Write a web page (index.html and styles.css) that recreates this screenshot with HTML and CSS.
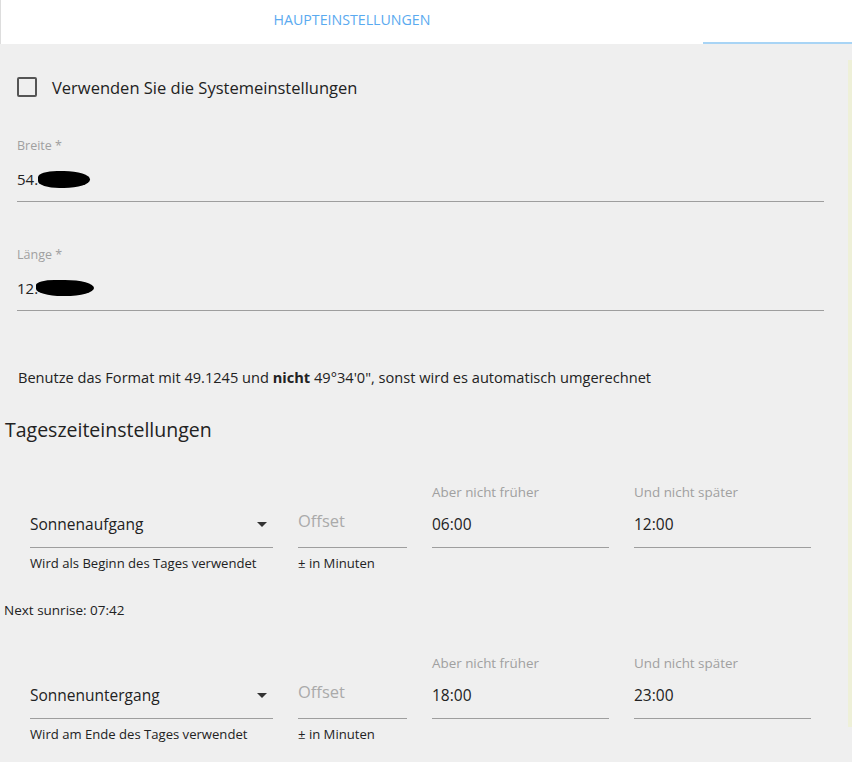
FILE: index.html
```html
<!DOCTYPE html>
<html lang="de">
<head>
    <meta charset="UTF-8">
    <meta name="viewport" content="width=device-width, initial-scale=1.0">
    <title>Haupteinstellungen</title>
    <link rel="stylesheet" href="styles.css">
</head>
<body>
    <div class="tabs">
        <div class="tab tab-main">HAUPTEINSTELLUNGEN</div>
        <div class="tab tab-second"></div>
    </div>
    <div class="page">
        <div class="content">
            <label class="check-row">
                <span class="checkbox"></span>
                <span>Verwenden Sie die Systemeinstellungen</span>
            </label>

            <div class="field field-first">
                <div class="field-label">Breite *</div>
                <div class="field-value">54.<span class="blot blot-a"></span></div>
            </div>
            <div class="field">
                <div class="field-label">Länge *</div>
                <div class="field-value">12.<span class="blot blot-b"></span></div>
            </div>

            <p class="hint">Benutze das Format mit 49.1245 und <b>nicht</b> 49°34'0", sonst wird es automatisch umgerechnet</p>

            <h2 class="section">Tageszeiteinstellungen</h2>

            <div class="time-row">
                <div class="col col-select">
                    <div class="col-label"></div>
                    <div class="col-value">Sonnenaufgang<span class="arrow"></span></div>
                    <div class="col-help">Wird als Beginn des Tages verwendet</div>
                </div>
                <div class="col col-offset">
                    <div class="col-label"></div>
                    <div class="col-value placeholder">Offset</div>
                    <div class="col-help">± in Minuten</div>
                </div>
                <div class="col col-time">
                    <div class="col-label">Aber nicht früher</div>
                    <div class="col-value">06:00</div>
                    <div class="col-help"></div>
                </div>
                <div class="col col-time">
                    <div class="col-label">Und nicht später</div>
                    <div class="col-value">12:00</div>
                    <div class="col-help"></div>
                </div>
            </div>

            <div class="next">Next sunrise: 07:42</div>

            <div class="time-row time-row-second">
                <div class="col col-select">
                    <div class="col-label"></div>
                    <div class="col-value">Sonnenuntergang<span class="arrow"></span></div>
                    <div class="col-help">Wird am Ende des Tages verwendet</div>
                </div>
                <div class="col col-offset">
                    <div class="col-label"></div>
                    <div class="col-value placeholder">Offset</div>
                    <div class="col-help">± in Minuten</div>
                </div>
                <div class="col col-time">
                    <div class="col-label">Aber nicht früher</div>
                    <div class="col-value">18:00</div>
                    <div class="col-help"></div>
                </div>
                <div class="col col-time">
                    <div class="col-label">Und nicht später</div>
                    <div class="col-value">23:00</div>
                    <div class="col-help"></div>
                </div>
            </div>
        </div>
        <div class="side-strip"></div>
    </div>
</body>
</html>
```

FILE: styles.css
```css
html, body {
    margin: 0;
    padding: 0;
}
body {
    background: #efefef;
    font-family: "Open Sans", "Noto Sans", sans-serif;
    color: #222;
    width: 852px;
    height: 762px;
    overflow: hidden;
}
.tabs {
    display: flex;
    height: 44px;
    background: #fff;
    border-left: 1px solid #ddd;
    box-sizing: border-box;
}
.tab-main {
    width: 702px;
    text-align: center;
    color: #5aaaf0;
    font-size: 14.2px;
    line-height: 40px;
}
.tab-second {
    flex: 1;
    border-bottom: 2px solid #a8d4f5;
    box-sizing: border-box;
}
.page {
    display: flex;
}
.content {
    flex: 1;
}
.side-strip {
    width: 4px;
    margin-top: 16px;
    height: 667px;
    background: #eef0d8;
}
.check-row {
    display: flex;
    align-items: center;
    margin: 31px 0 0 17px;
    height: 24px;
    font-size: 16.5px;
    color: #222;
}
.checkbox {
    width: 16px;
    height: 16px;
    border: 2px solid #555;
    border-radius: 2px;
    margin-right: 15px;
}
.field {
    margin: 45px 24px 0 17px;
    border-bottom: 1px solid #9e9e9e;
    padding-bottom: 10px;
}
.field-first {
    margin-top: 39px;
}
.field-label {
    font-size: 12.5px;
    line-height: 16px;
    color: #a0a0a0;
}
.field-value {
    margin-top: 13px;
    font-size: 15px;
    line-height: 24px;
    display: flex;
    align-items: center;
}
.blot {
    display: inline-block;
    background: #000;
}
.blot-a {
    width: 52px;
    height: 17px;
    margin-left: 0;
    border-radius: 40% 55% 55% 45%;
}
.blot-b {
    width: 58px;
    height: 16px;
    margin-left: -2px;
    border-radius: 35% 55% 55% 50%;
}
.hint {
    margin: 56px 0 0 18px;
    font-size: 14.6px;
    line-height: 20px;
}
.section {
    margin: 30px 0 0 5px;
    font-size: 19.5px;
    font-weight: normal;
    line-height: 26px;
}
.time-row {
    display: flex;
    gap: 25px;
    margin: 41px 0 0 30px;
}
.time-row-second {
    margin-top: 37px;
}
.col-select {
    width: 243px;
}
.col-offset {
    width: 109px;
}
.col-time {
    width: 177px;
}
.col-label {
    height: 16px;
    font-size: 13.4px;
    line-height: 16px;
    color: #a0a0a0;
}
.col-value {
    display: flex;
    align-items: center;
    margin-top: 12px;
    height: 24px;
    padding-bottom: 11px;
    border-bottom: 1px solid #9e9e9e;
    font-size: 15.5px;
}
.placeholder {
    color: #aaa;
    font-size: 16.5px;
    align-items: flex-start;
    line-height: 17px;
}
.arrow {
    margin-left: auto;
    margin-right: 6px;
    width: 0;
    height: 0;
    border-left: 5px solid transparent;
    border-right: 5px solid transparent;
    border-top: 5px solid #333;
}
.col-help {
    margin-top: 7px;
    height: 16px;
    font-size: 13.1px;
    line-height: 16px;
}
.next {
    margin: 31px 0 0 4px;
    font-size: 13.5px;
    line-height: 16px;
}
```
